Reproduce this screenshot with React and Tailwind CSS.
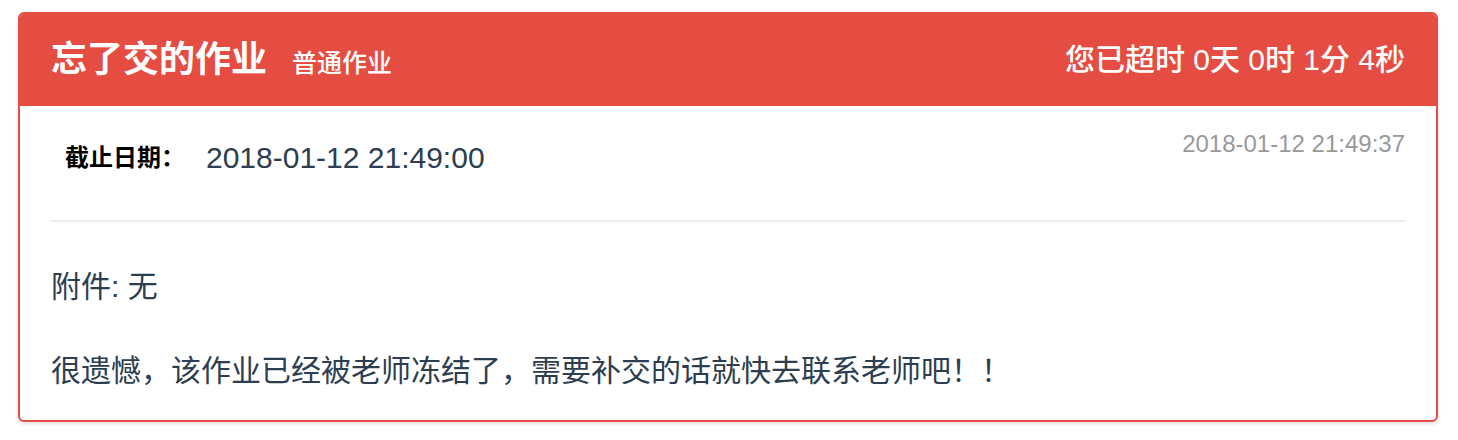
const font = { fontFamily: '"Liberation Sans", "Noto Sans CJK SC", sans-serif' };

const HomeworkCard = ({ title, type, overdue, deadline, now, attachment, message }) => {
  return (
    <div className="ml-[18px] mt-[12px] w-[1420px] border-2 border-[#e54d42] rounded-[6px] overflow-hidden bg-white shadow-[0_2px_4px_rgba(0,0,0,0.12)]">
      <div className="h-[92px] bg-[#e54d42] px-[31px] flex items-center justify-between text-white">
        <div className="flex items-baseline">
          <h2 className="text-[36px] leading-[44px] font-bold">{title}</h2>
          <span className="ml-[25px] text-[25px] leading-[30px] font-medium">{type}</span>
        </div>
        <div className="text-[30px] leading-[36px] font-medium">{overdue}</div>
      </div>

      <div className="px-[31px] pt-[23px] pb-[29px]">
        <div className="flex justify-between items-start">
          <div className="flex items-center h-[58px] pl-[14px]">
            <span className="w-[141px] text-[24px] font-bold text-black">截止日期：</span>
            <span className="text-[30px] leading-[36px] text-[#2c3e50]">{deadline}</span>
          </div>
          <span className="text-[24px] leading-[29px] text-[#999]">{now}</span>
        </div>

        <div className="mt-[33px] h-[2px] bg-[#eceff1]"></div>

        <p className="mt-[45px] text-[30px] leading-[40px] text-[#2c3e50]">附件: {attachment}</p>
        <p className="mt-[44px] text-[30px] leading-[40px] text-[#2c3e50]">{message}</p>
      </div>
    </div>
  );
};

const App = () => {
  return (
    <div className="min-h-[440px] bg-white" style={font}>
      <HomeworkCard
        title="忘了交的作业"
        type="普通作业"
        overdue="您已超时 0天 0时 1分 4秒"
        deadline="2018-01-12 21:49:00"
        now="2018-01-12 21:49:37"
        attachment="无"
        message="很遗憾，该作业已经被老师冻结了，需要补交的话就快去联系老师吧！！"
      />
    </div>
  );
};

export default App;
